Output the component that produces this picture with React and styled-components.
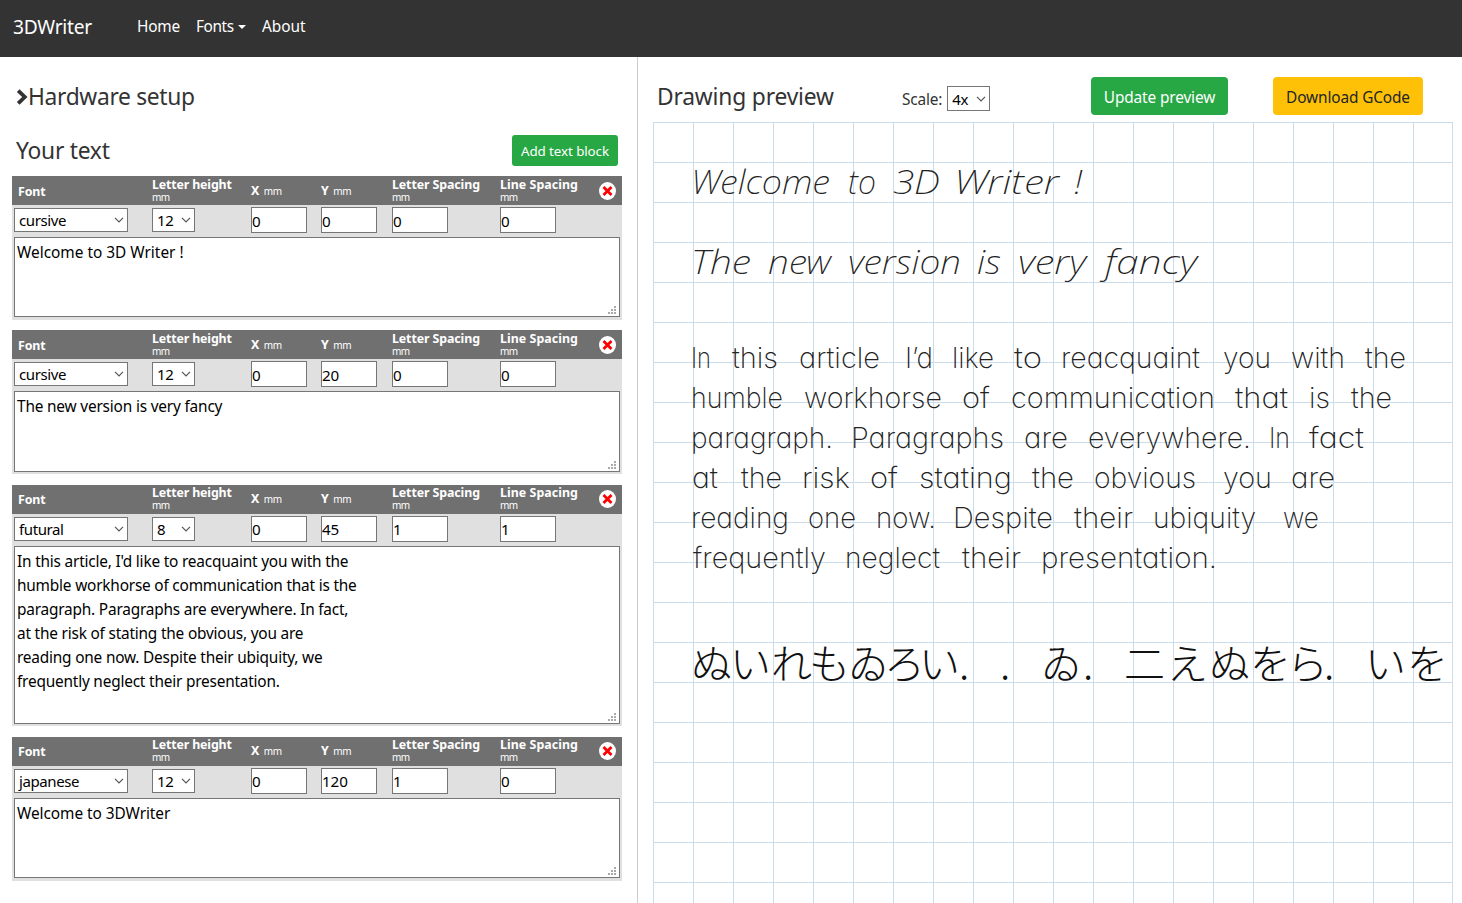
import React from 'react';
import styled, { createGlobalStyle } from 'styled-components';

const GlobalStyle = createGlobalStyle`
  *, *::before, *::after { box-sizing: border-box; }
  body {
    margin: 0;
    overflow: hidden;
    background: #fff;
    color: #333;
    font: 15.4px/24px "Noto Sans", "Open Sans", sans-serif;
    letter-spacing: -0.16px;
  }
`;

const Navbar = styled.nav`
  display: flex;
  align-items: center;
  height: 57px;
  padding: 0 0 3px 13px;
  background: #333;
  color: #fff;
`;
const Brand = styled.a`
  width: 124px;
  font-size: 19.2px;
  letter-spacing: -0.25px;
`;
const NavItem = styled.a`
  display: flex;
  align-items: center;
  width: ${(p) => p.$width}px;
  font-size: 15.4px;
  letter-spacing: ${(p) => p.$track || '-0.2px'};
`;
const Caret = styled.span`
  margin: 0 0 1px 4px;
  border: 4.5px solid transparent;
  border-top-color: #fff;
  border-bottom: 0;
`;

const Main = styled.main`
  display: flex;
  height: 846px;
`;
const Editor = styled.section`
  width: 638px;
  padding: 22px 15px 0 12px;
  border-right: 1px solid #ccc;
`;
const Preview = styled.section`
  flex: 1;
  padding: 20px 9px 0 15px;
`;
const Heading = styled.h4`
  display: flex;
  align-items: center;
  margin: 0;
  height: 36px;
  color: #333;
  font-size: 22.8px;
  font-weight: 400;
  letter-spacing: ${(p) => p.$track};
`;
const SetupHeading = styled(Heading)`
  padding-left: 4px;
`;
const TextHeader = styled.div`
  display: flex;
  align-items: center;
  justify-content: space-between;
  height: 31px;
  margin: 20px 4px 10px;
`;
const Button = styled.button`
  height: 38px;
  width: ${(p) => p.$width}px;
  padding: 4px 0 0;
  border: 0;
  border-radius: 4px;
  background: ${(p) => (p.$warning ? '#ffc107' : '#28a745')};
  color: ${(p) => (p.$warning ? '#212529' : '#fff')};
  font: inherit;
  letter-spacing: -0.13px;
`;
const SmallButton = styled(Button)`
  height: 31px;
  padding-top: 1px;
  border-radius: 3px;
  font-size: 13.4px;
  letter-spacing: -0.1px;
`;

const Block = styled.article`
  height: ${(p) => p.$height}px;
  margin-bottom: 10.4px;
  background: #e0e0e0;
`;
const Columns = styled.div`
  display: grid;
  grid-template-columns: 138px 99px 70px 71px 108px 99px auto;
  align-items: center;
  padding-left: 2px;
`;
const BlockHead = styled(Columns)`
  height: 29px;
  background: #707070;
  color: #fff;
`;
const BlockFields = styled(Columns)`
  height: 32px;
  padding-bottom: 2px;
`;
const Label = styled.div`
  padding: ${(p) => (p.$inset ? '1px 0 0 4px' : '0')};
  font-size: 12.4px;
  font-weight: 700;
  line-height: 13px;
  letter-spacing: ${(p) => p.$track || '-0.1px'};
  white-space: nowrap;
`;
const Unit = styled.small`
  display: ${(p) => (p.$below ? 'block' : 'inline')};
  margin-left: ${(p) => (p.$below ? 0 : '1.5px')};
  font-size: 10px;
  font-weight: 400;
  line-height: 13px;
  letter-spacing: -0.5px;
`;
const RemoveIcon = styled.svg`
  display: block;
  width: 17px;
  height: 18px;
`;
const SelectBox = styled.div`
  display: flex;
  align-items: center;
  justify-content: space-between;
  width: ${(p) => p.$width}px;
  height: ${(p) => p.$height || 24}px;
  padding: 0 3px 0 4px;
  border: 1px solid #767676;
  background: #fff;
  color: #000;
  font-size: 15px;
  letter-spacing: -0.4px;
`;
const NumberInput = styled.input`
  width: 56px;
  height: 26px;
  padding: 1px 0 0;
  border: 1px solid #767676;
  border-radius: 0;
  background: #fff;
  color: #000;
  font: inherit;
  font-size: 15.2px;
  letter-spacing: -0.1px;
`;
const AreaWrap = styled.div`
  position: relative;
  height: ${(p) => p.$height}px;
  margin: 0 2px;
`;
const Area = styled.textarea`
  display: block;
  width: 100%;
  height: 100%;
  padding: 3px 2px 0;
  border: 1px solid #767676;
  resize: none;
  overflow: hidden;
  background: #fff;
  color: #000;
  font: inherit;
  letter-spacing: ${(p) => p.$track};
`;
const Grip = styled.svg`
  position: absolute;
  right: 4px;
  bottom: 3px;
`;

const PreviewBar = styled.header`
  display: flex;
  height: 45px;
  padding-left: 4px;
`;
const PreviewTitle = styled(Heading)`
  width: 245px;
  height: 40px;
`;
const ScaleLabel = styled.label`
  display: flex;
  align-items: center;
  gap: 5px;
  width: 189px;
  height: 43px;
  letter-spacing: -0.15px;
`;
const ScaleName = styled.span`
  padding-top: 2px;
`;
const DownloadSlot = styled.div`
  margin-left: 45px;
`;
const Canvas = styled.svg`
  display: block;
`;
const Plain = styled.text`
  font-family: Inter, sans-serif;
  font-size: 29px;
  font-weight: 200;
  font-feature-settings: "cv11";
  letter-spacing: 0;
  fill: #222;
`;
const Cursive = styled.text`
  font-family: "Noto Sans", sans-serif;
  font-size: 33px;
  font-style: italic;
  font-weight: 200;
  letter-spacing: 0;
  fill: #222;
`;
const Kana = styled.text`
  font-family: "Noto Sans CJK JP", sans-serif;
  font-size: 41px;
  font-weight: 200;
  letter-spacing: 0;
  fill: #111;
`;

const Chevron = () => (
  <svg width="10" height="6" viewBox="0 0 10 6">
    <path d="M1 0.8 L5 4.8 L9 0.8" fill="none" stroke="#555" strokeWidth="1.2" />
  </svg>
);

const Select = ({ children, ...rest }) => (
  <SelectBox {...rest}>
    {children}
    <Chevron />
  </SelectBox>
);

const TextBlock = ({ font, size, x, y, letter, line, text, track, height }) => (
  <Block $height={height}>
    <BlockHead>
      <Label $inset>Font</Label>
      <Label $track="-0.15px">Letter height<Unit $below>mm</Unit></Label>
      <Label>X <Unit>mm</Unit></Label>
      <Label>Y <Unit>mm</Unit></Label>
      <Label $track="-0.1px">Letter Spacing<Unit $below>mm</Unit></Label>
      <Label $track="0.05px">Line Spacing<Unit $below>mm</Unit></Label>
      <RemoveIcon viewBox="0 0 17 18">
        <ellipse cx="8.5" cy="9" rx="8.5" ry="9" fill="#fff" />
        <path d="M4.5 5 L12.5 13 M12.5 5 L4.5 13" stroke="#f00" strokeWidth="2.8" />
      </RemoveIcon>
    </BlockHead>
    <BlockFields>
      <Select $width={114}>{font}</Select>
      <Select $width={43}>{size}</Select>
      <NumberInput defaultValue={x} />
      <NumberInput defaultValue={y} />
      <NumberInput defaultValue={letter} />
      <NumberInput defaultValue={line} />
    </BlockFields>
    <AreaWrap $height={height - 63.6}>
      <Area $track={track} defaultValue={text} spellCheck={false} />
      <Grip width="8" height="8" fill="#aaa">
        <path d="M6 0h2v2h-2z M3 3h2v2h-2z M6 3h2v2h-2z M0 6h2v2h-2z M3 6h2v2h-2z M6 6h2v2h-2z" />
      </Grip>
    </AreaWrap>
  </Block>
);

const BLOCKS = [
  { font: 'cursive', size: 12, x: 0, y: 0, letter: 0, line: 0, height: 144, track: '0', text: 'Welcome to 3D Writer !' },
  { font: 'cursive', size: 12, x: 0, y: 20, letter: 0, line: 0, height: 144, track: '-0.18px', text: 'The new version is very fancy' },
  {
    font: 'futural', size: 8, x: 0, y: 45, letter: 1, line: 1, height: 241.7, track: '-0.2px',
    text: "In this article, I'd like to reacquaint you with the\nhumble workhorse of communication that is the\nparagraph. Paragraphs are everywhere. In fact,\nat the risk of stating the obvious, you are\nreading one now. Despite their ubiquity, we\nfrequently neglect their presentation.",
  },
  { font: 'japanese', size: 12, x: 0, y: 120, letter: 1, line: 0, height: 144, track: '-0.05px', text: 'Welcome to 3DWriter' },
];

/* Each plotted word: [text, start x, end x] in canvas units. */
const CURSIVE_LINES = [
  [72, [['Welcome', 38, 177], ['to', 195, 223], ['3D', 240, 287], ['Writer', 301, 406], ['!', 421, 429]]],
  [152, [['The', 38, 98], ['new', 115, 178], ['version', 195, 308], ['is', 324, 348], ['very', 365, 433], ['fancy', 452, 544]]],
];
const PLAIN_LINES = [
  [['In', 38, 58], ['this', 79, 125], ['article', 146, 227], ["I’d", 252, 280], ['like', 299, 341], ['to', 361, 389], ['reacquaint', 408, 547], ['you', 570, 618], ['with', 638, 692], ['the', 712, 753]],
  [['humble', 38, 130], ['workhorse', 151, 289], ['of', 309, 337], ['communication', 358, 562], ['that', 582, 635], ['is', 656, 677], ['the', 698, 739]],
  [['paragraph.', 38, 180], ['Paragraphs', 198, 351], ['are', 371, 415], ['everywhere.', 435, 598], ['In', 616, 637], ['fact', 656, 711]],
  [['at', 39, 65], ['the', 88, 129], ['risk', 149, 197], ['of', 217, 245], ['stating', 266, 359], ['the', 379, 421], ['obvious', 441, 543], ['you', 570, 619], ['are', 638, 682]],
  [['reading', 38, 136], ['one', 155, 203], ['now.', 223, 283], ['Despite', 300, 400], ['their', 421, 480], ['ubiquity', 500, 603], ['we', 630, 666]],
  [['frequently', 40, 173], ['neglect', 192, 287], ['their', 309, 368], ['presentation.', 388, 564]],
];
const KANA = 'ぬいれもゐろい..ゐ.二えぬをら.いを';
const KANA_X = [38, 77, 118, 156, 195, 231, 266, 306, 347, 388, 430, 471, 514, 556, 597, 634, 671, 712, 754];

const steps = (n) => Array.from({ length: n }, (_, i) => i * 40 + 0.5);

const Words = ({ as: Word, y, words }) =>
  words.map(([text, from, to]) => (
    <Word key={from} x={from} y={y} textLength={to - from} lengthAdjust="spacingAndGlyphs">{text}</Word>
  ));

const Drawing = () => (
  <Canvas width="800" height="781">
    <g stroke="#ccdceb">
      {[...steps(20), 799.5].map((x) => <line key={x} x1={x} x2={x} y1="0" y2="781" />)}
      {steps(20).map((y) => <line key={y} x1="0" x2="800" y1={y} y2={y} />)}
    </g>
    {CURSIVE_LINES.map(([y, words]) => <Words key={y} as={Cursive} y={y} words={words} />)}
    {PLAIN_LINES.map((words, i) => <Words key={i} as={Plain} y={245.5 + i * 40} words={words} />)}
    <Kana x={KANA_X.join(' ')} y="557">{KANA}</Kana>
  </Canvas>
);

export default function App() {
  return (
    <>
      <GlobalStyle />
      <Navbar>
        <Brand>3DWriter</Brand>
        <NavItem $width={59}>Home</NavItem>
        <NavItem $width={66} $track="-0.4px">Fonts<Caret /></NavItem>
        <NavItem $width={60} $track="0">About</NavItem>
      </Navbar>
      <Main>
        <Editor>
          <SetupHeading $track="-0.33px">
            <svg width="12" height="16" viewBox="0 0 12 16">
              <path d="M2.2 1.6 L8.8 8 L2.2 14.4" fill="none" stroke="#333" strokeWidth="3.8" />
            </svg>
            Hardware setup
          </SetupHeading>
          <TextHeader>
            <Heading $track="-0.25px">Your text</Heading>
            <SmallButton $width={106}>Add text block</SmallButton>
          </TextHeader>
          {BLOCKS.map((block, i) => <TextBlock key={i} {...block} />)}
        </Editor>
        <Preview>
          <PreviewBar>
            <PreviewTitle $track="-0.18px">Drawing preview</PreviewTitle>
            <ScaleLabel><ScaleName>Scale:</ScaleName><Select $width={43} $height={25}>4x</Select></ScaleLabel>
            <Button $width={137}>Update preview</Button>
            <DownloadSlot>
              <Button $width={150} $warning>Download GCode</Button>
            </DownloadSlot>
          </PreviewBar>
          <Drawing />
        </Preview>
      </Main>
    </>
  );
}
